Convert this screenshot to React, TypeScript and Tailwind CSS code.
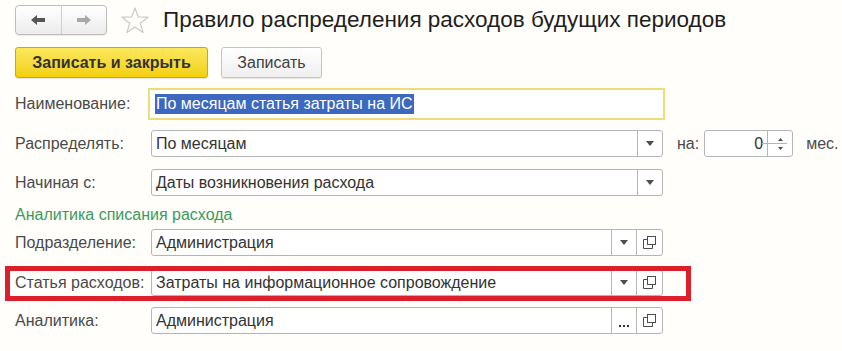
import React from "react";

const font = { fontFamily: '"Liberation Sans", Arial, sans-serif' };

function Arrow({ dir, color }: { dir: "left" | "right"; color: string }) {
  return (
    <svg width="14" height="10" viewBox="0 0 14 10" style={{ transform: dir === "right" ? "scaleX(-1)" : undefined }}>
      <path d="M0 5 L6 0 L6 3 L14 3 L14 7 L6 7 L6 10 Z" fill={color} />
    </svg>
  );
}

function Star() {
  return (
    <svg width="28" height="27" viewBox="0 0 28 27">
      <polygon
        points="14,1 17.3,10 27,10.2 19.3,16.2 22.1,25.6 14,20 5.9,25.6 8.7,16.2 1,10.2 10.7,10"
        fill="none"
        stroke="#c9c9c9"
        strokeWidth="1.2"
        strokeLinejoin="round"
      />
    </svg>
  );
}

function DropArrow() {
  return (
    <svg width="8" height="5" viewBox="0 0 8 5">
      <polygon points="0,0 8,0 4,5" fill="#4d4d4d" />
    </svg>
  );
}

function OpenIcon() {
  return (
    <svg width="13" height="13" viewBox="0 0 13 13">
      <rect x="4.5" y="0.5" width="8" height="8" fill="none" stroke="#4d4d4d" strokeWidth="1" />
      <path d="M4.5 3.5 H0.5 V12.5 H9.5 V8.5" fill="none" stroke="#4d4d4d" strokeWidth="1" />
    </svg>
  );
}

function Label({ children }: { children: React.ReactNode }) {
  return <div className="w-[151px] shrink-0 pl-[15px] text-[16px] text-[#4a4a4a] whitespace-nowrap">{children}</div>;
}

function Field({
  value,
  width = 512,
  drop = false,
  open = false,
  dots = false,
}: {
  value: string;
  width?: number;
  drop?: boolean;
  open?: boolean;
  dots?: boolean;
}) {
  return (
    <div
      className="flex h-[27px] items-stretch rounded-[3px] border border-[#b5b5b5] bg-white"
      style={{ width }}
    >
      <div className="flex flex-1 items-center pl-[4px] text-[16px] text-[#333] whitespace-nowrap overflow-hidden">{value}</div>
      {drop && (
        <div className="flex w-[25px] items-center justify-center border-l border-[#b5b5b5]">
          <DropArrow />
        </div>
      )}
      {dots && (
        <div className="flex w-[25px] items-end justify-center border-l border-[#b5b5b5] pb-[6px]">
          <div className="flex gap-[2px]">
            <span className="block h-[2px] w-[2px] bg-[#333]" />
            <span className="block h-[2px] w-[2px] bg-[#333]" />
            <span className="block h-[2px] w-[2px] bg-[#333]" />
          </div>
        </div>
      )}
      {open && (
        <div className="flex w-[26px] items-center justify-center border-l border-[#b5b5b5]">
          <OpenIcon />
        </div>
      )}
    </div>
  );
}

export default function App() {
  return (
    <div className="w-[842px] h-[351px] overflow-hidden bg-[#fffefa] flex flex-col" style={font}>
      {/* header */}
      <div className="flex items-center h-[30px] mt-[5px] pl-[15px]">
        <div className="flex h-[30px] w-[92px] rounded-[4px] border border-[#bdbdbd] bg-gradient-to-b from-white to-[#ececec] shadow-[0_1px_1px_rgba(0,0,0,0.08)]">
          <div className="flex flex-1 items-center justify-center border-r border-[#cfcfcf]">
            <Arrow dir="left" color="#555" />
          </div>
          <div className="flex flex-1 items-center justify-center">
            <Arrow dir="right" color="#a8a8a8" />
          </div>
        </div>
        <div className="ml-[14px] flex items-center">
          <Star />
        </div>
        <div className="ml-[14px] text-[22.5px] text-[#1e1e1e] leading-none whitespace-nowrap">
          Правило распределения расходов будущих периодов
        </div>
      </div>

      {/* buttons */}
      <div className="flex mt-[12px] pl-[15px] gap-[13px]">
        <div className="flex h-[31px] w-[193px] items-center justify-center rounded-[3px] border border-[#c9ab10] bg-gradient-to-b from-[#fbe85a] to-[#f3d000] text-[16px] font-bold text-[#333] shadow-[0_1px_1px_rgba(0,0,0,0.12)]">
          Записать и закрыть
        </div>
        <div className="flex h-[31px] w-[101px] items-center justify-center rounded-[3px] border border-[#c4c4c4] bg-gradient-to-b from-white to-[#efefef] text-[16px] text-[#404040] shadow-[0_1px_1px_rgba(0,0,0,0.1)]">
          Записать
        </div>
      </div>

      {/* Наименование */}
      <div className="flex items-center mt-[10px] h-[32px]">
        <Label>Наименование:</Label>
        <div className="ml-[-3px] flex h-[32px] w-[517px] items-center border-2 border-[#eedc78] bg-white pl-[5px]">
          <span className="bg-[#3d68bf] text-white text-[16px] leading-[20px] px-[1px]">По месяцам статья затраты на ИС</span>
        </div>
      </div>

      {/* Распределять */}
      <div className="flex items-center mt-[10px]">
        <Label>Распределять:</Label>
        <Field value="По месяцам" drop />
        <div className="ml-[14px] text-[16px] text-[#4a4a4a]">на:</div>
        <div className="ml-[5px] flex h-[27px] w-[89px] rounded-[3px] border border-[#b5b5b5] bg-white">
          <div className="flex flex-1 items-center justify-end pr-[4px] text-[16px] text-[#333]">0</div>
          <div className="relative w-[25px] border-l border-[#b5b5b5] flex flex-col items-center justify-center gap-[6px]">
            <svg width="5" height="3" viewBox="0 0 5 3"><polygon points="0,3 5,3 2.5,0" fill="#4d4d4d" /></svg>
            <svg width="5" height="3" viewBox="0 0 5 3"><polygon points="0,0 5,0 2.5,3" fill="#4d4d4d" /></svg>
            <div className="absolute left-[-6px] right-[5px] top-[12px] h-px bg-[#b5b5b5]" />
          </div>
        </div>
        <div className="ml-[13px] text-[16px] text-[#4a4a4a]">мес.</div>
      </div>

      {/* Начиная с */}
      <div className="flex items-center mt-[12px]">
        <Label>Начиная с:</Label>
        <Field value="Даты возникновения расхода" drop />
      </div>

      {/* section */}
      <div className="mt-[10px] pl-[15px] text-[16px] leading-[18px] text-[#3b9a5c]">Аналитика списания расхода</div>

      <div className="flex items-center mt-[5px]">
        <Label>Подразделение:</Label>
        <Field value="Администрация" drop open />
      </div>

      <div className="relative flex items-center mt-[13px]">
        <Label>Статья расходов:</Label>
        <Field value="Затраты на информационное сопровождение" drop open />
        <div className="pointer-events-none absolute left-[5px] top-[-3px] h-[35px] w-[686px] border-[5px] border-[#dc1f2b]" />
      </div>

      <div className="flex items-center mt-[11px]">
        <Label>Аналитика:</Label>
        <Field value="Администрация" dots open />
      </div>
    </div>
  );
}
